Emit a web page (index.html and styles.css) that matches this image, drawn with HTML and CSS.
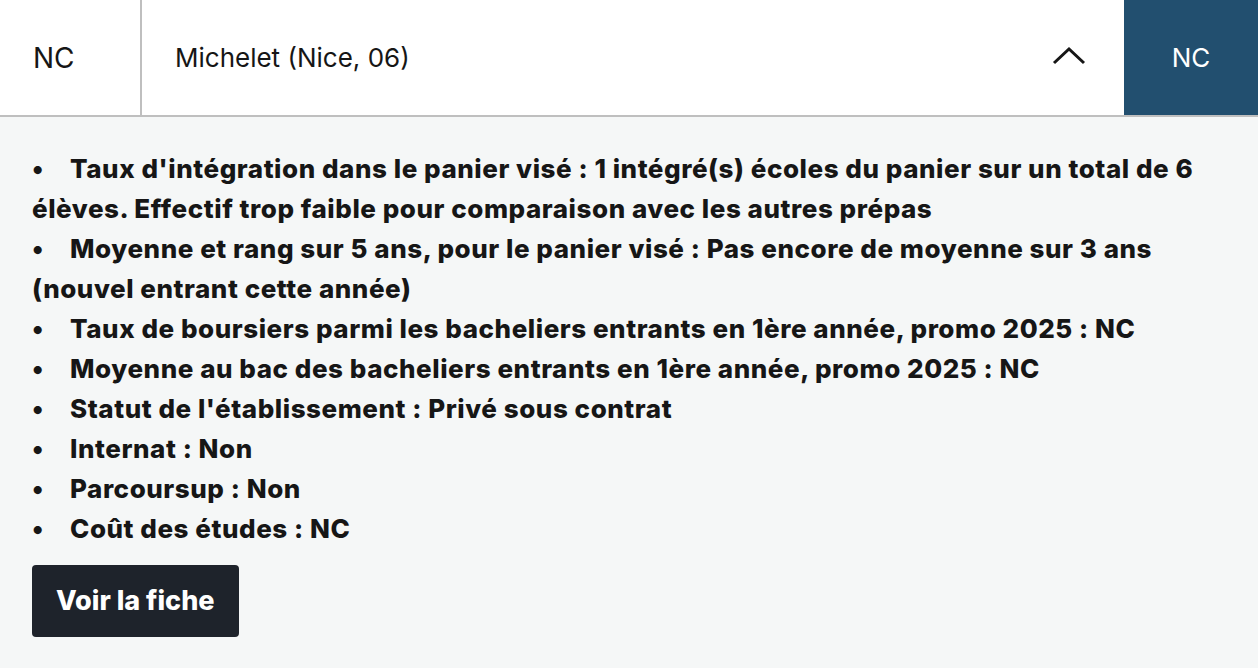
FILE: index.html
```html
<!DOCTYPE html>
<html lang="fr">
<head>
    <meta charset="UTF-8">
    <meta name="viewport" content="width=device-width, initial-scale=1.0">
    <title>Michelet (Nice, 06)</title>
    <link rel="stylesheet" href="styles.css">
</head>
<body>
    <div class="prepa-row">
        <div class="prepa-head">
            <div class="cell-rank">NC</div>
            <div class="cell-name">
                <span>Michelet (Nice, 06)</span>
                <svg class="chevron" width="34" height="20" viewBox="0 0 34 20">
                    <polyline points="2,17 17,3 32,17" fill="none" stroke="#161616" stroke-width="3"/>
                </svg>
            </div>
            <div class="cell-score">NC</div>
        </div>

        <div class="prepa-details">
            <ul class="details-list">
                <li>Taux d'intégration dans le panier visé : 1 intégré(s) écoles du panier sur un total de 6 élèves. Effectif trop faible pour comparaison avec les autres prépas</li>
                <li>Moyenne et rang sur 5 ans, pour le panier visé : Pas encore de moyenne sur 3 ans (nouvel entrant cette année)</li>
                <li>Taux de boursiers parmi les bacheliers entrants en 1ère année, promo 2025 : NC</li>
                <li>Moyenne au bac des bacheliers entrants en 1ère année, promo 2025 : NC</li>
                <li>Statut de l'établissement : Privé sous contrat</li>
                <li>Internat : Non</li>
                <li>Parcoursup : Non</li>
                <li>Coût des études : NC</li>
            </ul>
            <a class="voir-button" href="#">Voir la fiche</a>
        </div>
    </div>
</body>
</html>
```

FILE: styles.css
```css
body {
    margin: 0;
    font-family: Inter, "Noto Sans", sans-serif;
    color: #161616;
    background-color: #f5f7f7;
}
.prepa-head {
    display: flex;
    height: 115px;
    background-color: #fff;
    border-bottom: 2px solid #bfbfbf;
}
.cell-rank {
    width: 142px;
    box-sizing: border-box;
    border-right: 2px solid #bfbfbf;
    display: flex;
    align-items: center;
    padding-left: 33px;
    font-size: 28px;
}
.cell-name {
    flex: 1;
    display: flex;
    align-items: center;
    justify-content: space-between;
    padding: 0 38px 0 33px;
    font-size: 26px;
}
.chevron {
    margin-top: -3px;
}
.cell-score {
    width: 134px;
    background-color: #224f6f;
    color: #fff;
    display: flex;
    align-items: center;
    justify-content: center;
    font-size: 26px;
}
.prepa-details {
    padding: 32px 32px 31px;
}
.details-list {
    list-style: none;
    margin: 0 0 16px;
    padding: 0;
    font-size: 26px;
    font-weight: 800;
    line-height: 40px;
    letter-spacing: 0.55px;
}
.details-list li::before {
    content: "\2022";
    display: inline-block;
    width: 38px;
}
.voir-button {
    display: inline-block;
    background-color: #1e232b;
    color: #fff;
    text-decoration: none;
    font-size: 27px;
    font-weight: 800;
    line-height: 72px;
    padding: 0 24px;
    border-radius: 4px;
}
```
